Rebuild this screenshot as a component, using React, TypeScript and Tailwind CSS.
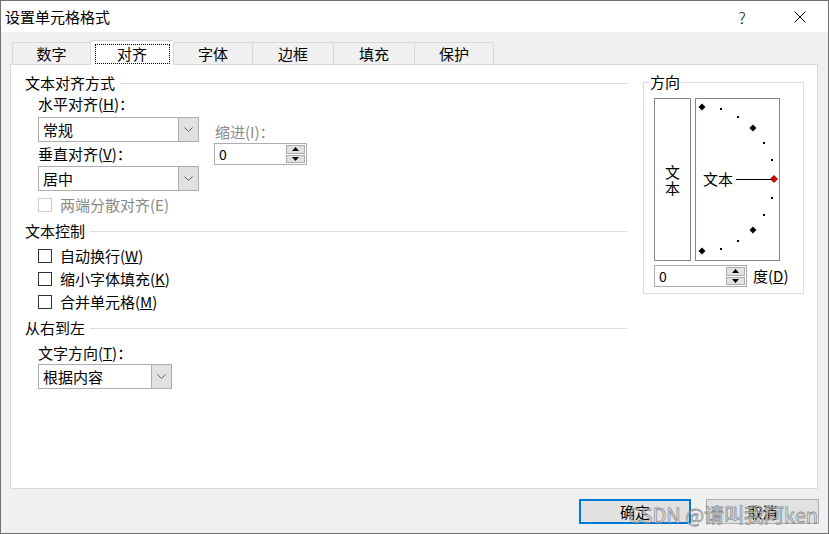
const font = "font-['Noto_Sans_CJK_SC','Liberation_Sans',sans-serif]";

function Chevron() {
  return (
    <svg width="9" height="5" viewBox="0 0 9 5">
      <path d="M0.5 0.5 L4.5 4.5 L8.5 0.5" fill="none" stroke="#5a5a5a" strokeWidth="1" />
    </svg>
  );
}

function Select({ text, width }: { text: string; width: string }) {
  return (
    <div className={`flex h-[25px] border border-[#adadad] bg-white ${width}`}>
      <div className="flex flex-1 items-center pl-[4px] text-[15px] leading-[20px]">{text}</div>
      <div className="flex w-[20px] items-center justify-center border-l border-[#adadad] bg-[#e1e1e1]">
        <Chevron />
      </div>
    </div>
  );
}

function Spin() {
  return (
    <div className="flex h-[22px] w-[93px] border border-[#adadad] bg-white">
      <div className="flex flex-1 items-center pl-[4px] text-[14px] leading-[20px]">0</div>
      <div className="flex w-[21px] flex-col gap-px p-px">
        <div className="flex flex-1 items-center justify-center border border-[#adadad] bg-[#e1e1e1]">
          <svg width="7" height="4" viewBox="0 0 7 4">
            <polygon points="0,4 3.5,0 7,4" fill="#000" />
          </svg>
        </div>
        <div className="flex flex-1 items-center justify-center border border-[#adadad] bg-[#e1e1e1]">
          <svg width="7" height="4" viewBox="0 0 7 4">
            <polygon points="0,0 3.5,4 7,0" fill="#000" />
          </svg>
        </div>
      </div>
    </div>
  );
}

function Header({ text, mt }: { text: string; mt: string }) {
  return (
    <div className={`flex h-[20px] items-center ${mt}`}>
      <span className="text-[15px] leading-[20px]">{text}</span>
      <div className="ml-[5px] h-px flex-1 bg-[#dcdcdc]" />
    </div>
  );
}

function Check({ label, mt, disabled }: { label: React.ReactNode; mt: string; disabled?: boolean }) {
  return (
    <div className={`ml-[13px] flex h-[20px] items-center ${mt}`}>
      <span
        className={`h-[14px] w-[14px] border bg-white ${disabled ? 'border-[#cccccc]' : 'border-[#333333]'}`}
      />
      <span className={`ml-[8px] text-[15px] leading-[20px] ${disabled ? 'text-[#8a8a8a]' : 'text-black'}`}>
        {label}
      </span>
    </div>
  );
}

function Dial() {
  const cx = 6;
  const cy = 80;
  const r = 72;
  const angles = [90, 75, 60, 45, 30, 15, 0, -15, -30, -45, -60, -75, -90];
  return (
    <svg width="83" height="161" viewBox="0 0 83 161">
      {angles.map((a) => {
        const x = cx + r * Math.cos((a * Math.PI) / 180);
        const y = cy - r * Math.sin((a * Math.PI) / 180);
        if (a === 0) {
          return (
            <polygon
              key={a}
              points={`${x},${y - 3.5} ${x + 3.5},${y} ${x},${y + 3.5} ${x - 3.5},${y}`}
              fill="#e00000"
              stroke="#500000"
              strokeWidth="0.8"
            />
          );
        }
        if (a % 45 === 0) {
          return (
            <polygon
              key={a}
              points={`${x},${y - 3.5} ${x + 3.5},${y} ${x},${y + 3.5} ${x - 3.5},${y}`}
              fill="#000"
            />
          );
        }
        return <rect key={a} x={Math.round(x) - 1} y={Math.round(y) - 1} width="2" height="2" fill="#000" />;
      })}
      <line x1="40" y1="80.5" x2="76" y2="80.5" stroke="#000" strokeWidth="1" />
      <text x="7" y="86" fontSize="15" fontFamily="Noto Sans CJK SC, sans-serif" fill="#000">
        文本
      </text>
    </svg>
  );
}

export default function App() {
  const tabs = [
    { name: '数字', w: 'w-[78px]' },
    { name: '对齐', w: 'w-[83px]' },
    { name: '字体', w: 'w-[79px]' },
    { name: '边框', w: 'w-[81px]' },
    { name: '填充', w: 'w-[81px]' },
    { name: '保护', w: 'w-[80px]' },
  ];

  return (
    <div className={`relative flex h-[534px] w-[829px] flex-col overflow-hidden border border-[#707070] text-black ${font}`}>
      {/* Title bar */}
      <div className="flex h-[31px] items-center bg-white pl-[4px] pr-[5px]">
        <span className="text-[15px] leading-[20px]">设置单元格格式</span>
        <div className="ml-auto flex h-full">
          <div className="flex w-[46px] items-center justify-center text-[16px] font-light">?</div>
          <div className="ml-[12px] flex w-[46px] items-center justify-center">
            <svg width="12" height="12" viewBox="0 0 12 12">
              <path d="M0.5 0.5 L11.5 11.5 M11.5 0.5 L0.5 11.5" stroke="#000" strokeWidth="1" />
            </svg>
          </div>
        </div>
      </div>

      {/* Body */}
      <div className="flex flex-1 flex-col bg-[#f0f0f0] pl-[9px] pr-[10px]">
        {/* Tabs */}
        <div className="mt-[8px] flex h-[24px] items-end pl-[2px]">
          {tabs.map((t, i) =>
            t.name === '对齐' ? (
              <div
                key={t.name}
                className={`relative z-10 -mb-px flex h-[25px] ${t.w} justify-center border-l border-t border-[#d9d9d9] bg-white pt-[3px]`}
              >
                <span className="flex h-[20px] w-[75px] items-center justify-center border border-dotted border-black text-[15px] leading-[20px]">
                  {t.name}
                </span>
              </div>
            ) : (
              <div
                key={t.name}
                className={`flex h-[22px] ${t.w} items-center justify-center border-l border-t border-[#d9d9d9] text-[15px] leading-[20px] ${
                  i === tabs.length - 1 ? 'border-r' : ''
                }`}
              >
                {t.name}
              </div>
            )
          )}
        </div>

        {/* Panel */}
        <div className="flex h-[425px] border border-[#d9d9d9] bg-white">
          {/* Left column */}
          <div className="flex w-[616px] flex-col pl-[14px]">
            <Header text="文本对齐方式" mt="mt-[8px]" />
            <div className="ml-[13px] mt-[1px] flex">
              <div className="flex w-[161px] flex-col">
                <div className="h-[20px] text-[15px] leading-[20px]">
                  水平对齐(<span className="underline">H</span>)：
                </div>
                <div className="mt-[3px]">
                  <Select text="常规" width="w-[161px]" />
                </div>
                <div className="mt-[2px] h-[20px] text-[15px] leading-[20px]">
                  垂直对齐(<span className="underline">V</span>)：
                </div>
                <div className="mt-[2px]">
                  <Select text="居中" width="w-[161px]" />
                </div>
              </div>
              <div className="ml-[15px] flex flex-col pt-[28px]">
                <div className="h-[20px] pl-[1px] text-[15px] leading-[20px] text-[#8a8a8a]">缩进(I)：</div>
                <div className="mt-px">
                  <Spin />
                </div>
              </div>
            </div>
            <Check label="两端分散对齐(E)" mt="mt-[4px]" disabled />

            <Header text="文本控制" mt="mt-[6px]" />
            <Check
              label={
                <>
                  自动换行(<span className="underline">W</span>)
                </>
              }
              mt="mt-[5px]"
            />
            <Check
              label={
                <>
                  缩小字体填充(<span className="underline">K</span>)
                </>
              }
              mt="mt-[3px]"
            />
            <Check
              label={
                <>
                  合并单元格(<span className="underline">M</span>)
                </>
              }
              mt="mt-[3px]"
            />

            <Header text="从右到左" mt="mt-[6px]" />
            <div className="ml-[13px] mt-[5px] h-[20px] text-[15px] leading-[20px]">
              文字方向(<span className="underline">T</span>)：
            </div>
            <div className="ml-[13px] mt-px">
              <Select text="根据内容" width="w-[134px]" />
            </div>
          </div>

          {/* Orientation group */}
          <div className="relative ml-[16px] mt-[17px] h-[212px] w-[161px] border border-[#dcdcdc] pl-[10px] pt-[15px]">
            <span className="absolute -top-[11px] left-[5px] bg-white px-px text-[15px] leading-[20px]">方向</span>
            <div className="flex">
              <div className="flex h-[163px] w-[37px] flex-col items-center justify-center border border-[#828790] text-[15px] leading-[16px]">
                <span>文</span>
                <span>本</span>
              </div>
              <div className="ml-[4px] h-[163px] w-[85px] border border-[#828790]">
                <Dial />
              </div>
            </div>
            <div className="mt-[4px] flex items-center">
              <Spin />
              <span className="ml-[6px] text-[15px] leading-[20px]">
                度(<span className="underline">D</span>)
              </span>
            </div>
          </div>
        </div>

        {/* Buttons */}
        <div className="-mr-px mt-[10px] flex justify-end gap-[15px]">
          <button className="h-[25px] w-[112px] border-2 border-[#0078d7] bg-[#e1e1e1] text-[15px] leading-[20px]">
            确定
          </button>
          <button className="h-[25px] w-[113px] border border-[#adadad] bg-[#e1e1e1] text-[15px] leading-[20px]">
            取消
          </button>
        </div>
      </div>

      {/* Watermark */}
      <div className="pointer-events-none absolute bottom-[6px] right-[10px] text-[20px] leading-[24px] text-white/50 [-webkit-text-stroke:0.8px_rgba(110,110,110,0.75)]">
        CSDN @请叫我阿ken
      </div>
    </div>
  );
}
